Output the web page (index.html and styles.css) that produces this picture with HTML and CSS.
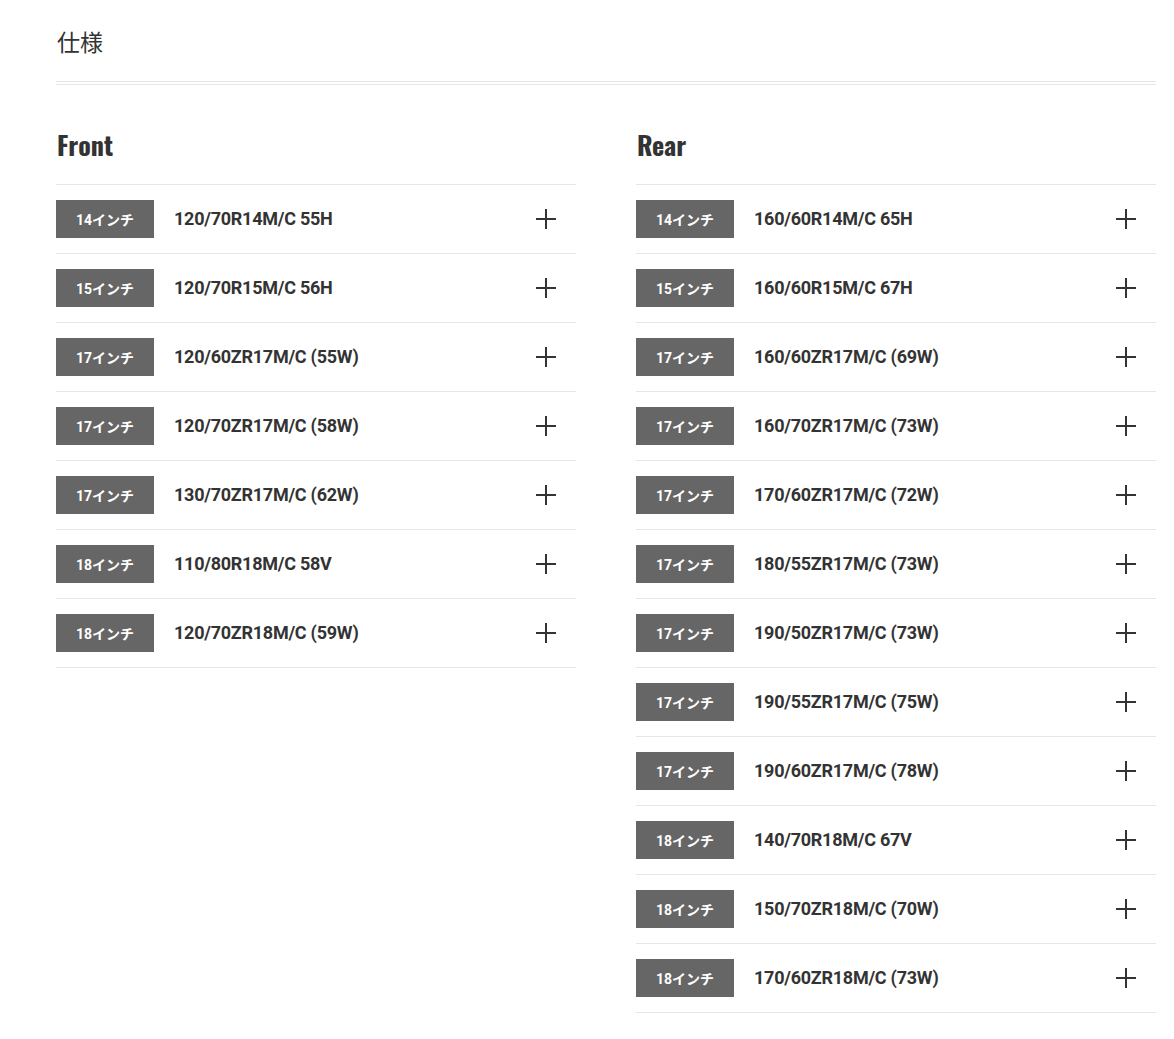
FILE: index.html
```
<!DOCTYPE html>
<html lang="ja">
<head>
<meta charset="utf-8">
<link rel="stylesheet" href="styles.css">
</head>
<body>
<div class="page">
  <h2 class="title">仕様</h2>
  <div class="rule"></div>
  <div class="cols">
    <section class="col">
      <h3 class="col-head">Front</h3>
      <ul class="list">
        <li class="row"><span class="badge">14インチ</span><span class="size">120/70R14M/C 55H</span><span class="plus"></span></li>
        <li class="row"><span class="badge">15インチ</span><span class="size">120/70R15M/C 56H</span><span class="plus"></span></li>
        <li class="row"><span class="badge">17インチ</span><span class="size">120/60ZR17M/C (55W)</span><span class="plus"></span></li>
        <li class="row"><span class="badge">17インチ</span><span class="size">120/70ZR17M/C (58W)</span><span class="plus"></span></li>
        <li class="row"><span class="badge">17インチ</span><span class="size">130/70ZR17M/C (62W)</span><span class="plus"></span></li>
        <li class="row"><span class="badge">18インチ</span><span class="size">110/80R18M/C 58V</span><span class="plus"></span></li>
        <li class="row"><span class="badge">18インチ</span><span class="size">120/70ZR18M/C (59W)</span><span class="plus"></span></li>
      </ul>
    </section>
    <section class="col">
      <h3 class="col-head">Rear</h3>
      <ul class="list">
        <li class="row"><span class="badge">14インチ</span><span class="size">160/60R14M/C 65H</span><span class="plus"></span></li>
        <li class="row"><span class="badge">15インチ</span><span class="size">160/60R15M/C 67H</span><span class="plus"></span></li>
        <li class="row"><span class="badge">17インチ</span><span class="size">160/60ZR17M/C (69W)</span><span class="plus"></span></li>
        <li class="row"><span class="badge">17インチ</span><span class="size">160/70ZR17M/C (73W)</span><span class="plus"></span></li>
        <li class="row"><span class="badge">17インチ</span><span class="size">170/60ZR17M/C (72W)</span><span class="plus"></span></li>
        <li class="row"><span class="badge">17インチ</span><span class="size">180/55ZR17M/C (73W)</span><span class="plus"></span></li>
        <li class="row"><span class="badge">17インチ</span><span class="size">190/50ZR17M/C (73W)</span><span class="plus"></span></li>
        <li class="row"><span class="badge">17インチ</span><span class="size">190/55ZR17M/C (75W)</span><span class="plus"></span></li>
        <li class="row"><span class="badge">17インチ</span><span class="size">190/60ZR17M/C (78W)</span><span class="plus"></span></li>
        <li class="row"><span class="badge">18インチ</span><span class="size">140/70R18M/C 67V</span><span class="plus"></span></li>
        <li class="row"><span class="badge">18インチ</span><span class="size">150/70ZR18M/C (70W)</span><span class="plus"></span></li>
        <li class="row"><span class="badge">18インチ</span><span class="size">170/60ZR18M/C (73W)</span><span class="plus"></span></li>
      </ul>
    </section>
  </div>
</div>
</body>
</html>
```
FILE: styles.css
```
html, body {
  margin: 0;
  padding: 0;
  background: #fff;
}
body {
  font-family: Roboto, "Noto Sans CJK JP", sans-serif;
  color: #333;
}
.page {
  width: 1100px;
  padding: 0 0 0 56px;
}
.title {
  margin: 0;
  padding-top: 26px;
  padding-left: 1px;
  font-family: "Noto Sans CJK JP", sans-serif;
  font-weight: 400;
  font-size: 23px;
  line-height: 30px;
  color: #333;
}
.rule {
  margin-top: 25px;
  height: 2px;
  border-top: 1px solid #e6e6e6;
  border-bottom: 1px solid #e6e6e6;
}
.cols {
  display: grid;
  grid-template-columns: 520px 520px;
  column-gap: 60px;
}
.col-head {
  margin: 0;
  padding-top: 42px;
  height: 57px;
  box-sizing: content-box;
  font-family: "Oswald", "Liberation Sans Narrow", "DejaVu Sans Condensed", "Roboto", sans-serif;
  font-stretch: condensed;
  font-weight: 700;
  font-size: 26px;
  line-height: 36px;
  color: #333;
  padding-left: 1px;
}
.list {
  list-style: none;
  margin: 0;
  padding: 0;
  border-bottom: 1px solid #e6e6e6;
}
.row {
  display: flex;
  align-items: center;
  border-top: 1px solid #e6e6e6;
  padding: 15px 20px 15px 0;
  height: 38px;
}
.badge {
  flex: 0 0 98px;
  height: 38px;
  background: #666;
  color: #fff;
  font-family: Roboto, "Noto Sans CJK JP", sans-serif;
  font-weight: 700;
  font-size: 14px;
  display: flex;
  align-items: center;
  justify-content: center;
}
.size {
  flex: 1;
  margin-left: 20px;
  font-weight: 700;
  font-size: 18px;
  letter-spacing: -0.25px;
  color: #333;
  margin-top: -2px;
}
.plus {
  position: relative;
  flex: 0 0 20px;
  height: 20px;
}
.plus::before,
.plus::after {
  content: "";
  position: absolute;
  background: #333;
}
.plus::before {
  left: 0;
  top: 9px;
  width: 20px;
  height: 2px;
}
.plus::after {
  left: 9px;
  top: 0;
  width: 2px;
  height: 20px;
}
```
